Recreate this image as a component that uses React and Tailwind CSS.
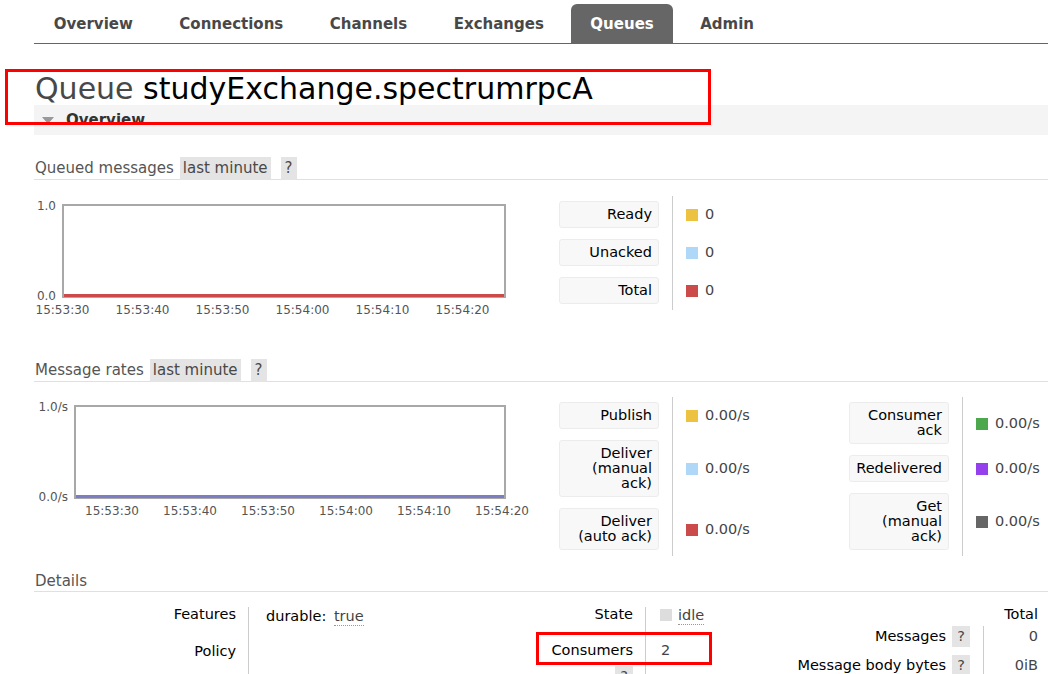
const tabs = ["Overview", "Connections", "Channels", "Exchanges", "Queues", "Admin"];

function Badge({ children, className = "" }) {
  return (
    <span className={`h-[23px] leading-[23px] bg-[#e4e4e4] text-[#484848] ${className}`}>{children}</span>
  );
}

function SectionHeader({ title, badges }) {
  return (
    <div className="flex items-center h-[23px] border-b border-[#e0e0e0] text-[15px] text-[#555]">
      <span className="ml-[1px]">{title}</span>
      {badges && (
        <>
          <Badge className="ml-[6px] px-[3px]">last minute</Badge>
          <Badge className="ml-[10px] px-[4px]">?</Badge>
        </>
      )}
    </div>
  );
}

function Chart({ plotLeft, yLabels, ticks, lineColor }) {
  const right = 472;
  return (
    <svg width="525" height="125" className="shrink-0 font-['DejaVu_Sans',sans-serif]">
      <rect x={plotLeft + 1} y="9" width={right - plotLeft - 2} height="92" fill="#fff" stroke="#a8a8a8" strokeWidth="2" />
      <line x1={plotLeft + 2} x2={right - 2} y1="99.5" y2="99.5" stroke={lineColor} strokeWidth="3" />
      <text x={plotLeft - 6} y="14" textAnchor="end" fontSize="12" fill="#545454">{yLabels[0]}</text>
      <text x={plotLeft - 6} y="103.5" textAnchor="end" fontSize="12" fill="#545454">{yLabels[1]}</text>
      {ticks.map((t) => (
        <text key={t.label} x={t.x} y="118" textAnchor="middle" fontSize="12" fill="#545454">
          {t.label}
        </text>
      ))}
    </svg>
  );
}

function Legend({ rows, valueWidth = "w-[177px]" }) {
  return (
    <div className="grid grid-cols-[113px_auto] self-start">
      {rows.map((r) => (
        <div key={r.label} className="contents">
          <div className="pt-[5px] pb-[6px] pr-[13px]">
            <div className="w-[100px] bg-[#f8f8f8] border border-[#ececec] rounded-[3px] text-right pl-[4px] pr-[6px] py-[5px] leading-[15px] text-[14.5px] text-black">
              {r.label}
            </div>
          </div>
          <div className={`${valueWidth} border-l border-[#ccc] pl-[13px] flex items-center gap-[7px] text-[14.5px] text-[#444]`}>
            <span className="w-[12px] h-[12px] shrink-0" style={{ backgroundColor: r.color }} />
            <span>{r.value}</span>
          </div>
        </div>
      ))}
    </div>
  );
}

const times = ["15:53:30", "15:53:40", "15:53:50", "15:54:00", "15:54:10", "15:54:20"];
const ticks1 = times.map((label, i) => ({ label, x: 28.5 + i * 80 }));
const ticks2 = times.map((label, i) => ({ label, x: 78 + i * 78 }));

function Abbr({ children }) {
  return <span className="text-[#444] border-b border-dotted border-[#999] pb-[1px]">{children}</span>;
}

function HelpBadge() {
  return <span className="w-[18px] h-[21px] leading-[21px] text-center bg-[#e4e4e4] text-[#484848]">?</span>;
}

export default function App() {
  return (
    <div className="relative w-[1048px] h-[674px] overflow-hidden bg-white font-['DejaVu_Sans',sans-serif]">
      {/* Tabs */}
      <nav className="ml-[34px] pt-[4px] border-b border-[#666] flex gap-[7px]">
        {tabs.map((t) => (
          <div
            key={t}
            className={
              t === "Queues"
                ? "h-[39px] pt-[2px] px-[19.75px] flex items-center rounded-t-[6px] bg-[#666] text-white font-bold text-[15px]"
                : "h-[39px] pt-[2px] px-[19.75px] flex items-center text-[#484848] font-bold text-[15px]"
            }
          >
            {t}
          </div>
        ))}
      </nav>

      <h1 className="ml-[35px] mt-[28px] h-[33px] leading-[33px] text-[30px] font-normal whitespace-nowrap">
        <span className="text-[#484848]">Queue</span> <span className="text-black">studyExchange.spectrumrpcA</span>
      </h1>

      <div className="ml-[34px] h-[30px] bg-[#f4f4f4] flex items-center">
        <span className="ml-[8px] w-0 h-0 border-x-[6px] border-x-transparent border-t-[7px] border-t-[#999]" />
        <span className="ml-[12px] font-bold text-[15px] text-[#333]">Overview</span>
      </div>

      <div className="ml-[34px]">
        <div className="mt-[22px]">
          <SectionHeader title="Queued messages" badges />
        </div>
        <div className="flex mt-[16px]">
          <Chart plotLeft={28} yLabels={["1.0", "0.0"]} ticks={ticks1} lineColor="#cb4b4b" />
          <Legend
            rows={[
              { label: "Ready", color: "#edc240", value: "0" },
              { label: "Unacked", color: "#afd8f8", value: "0" },
              { label: "Total", color: "#cb4b4b", value: "0" },
            ]}
          />
        </div>

        <div className="mt-[38px]">
          <SectionHeader title="Message rates" badges />
        </div>
        <div className="flex mt-[15px]">
          <Chart plotLeft={40} yLabels={["1.0/s", "0.0/s"]} ticks={ticks2} lineColor="#7d7dc6" />
          <Legend
            rows={[
              { label: "Publish", color: "#edc240", value: "0.00/s" },
              { label: "Deliver (manual ack)", color: "#afd8f8", value: "0.00/s" },
              { label: "Deliver (auto ack)", color: "#cb4b4b", value: "0.00/s" },
            ]}
          />
          <Legend
            valueWidth="w-[90px]"
            rows={[
              { label: "Consumer ack", color: "#4da74d", value: "0.00/s" },
              { label: "Redelivered", color: "#9440ed", value: "0.00/s" },
              { label: "Get (manual ack)", color: "#666666", value: "0.00/s" },
            ]}
          />
        </div>

        <div className="mt-[15px] flex items-center h-[21px] border-b border-[#e0e0e0] text-[15px] text-[#555]">
          <span className="ml-[1px]">Details</span>
        </div>

        <div className="flex mt-[15px] text-[14.5px] leading-[15px] text-black">
          {/* Table 1 */}
          <div className="grid grid-cols-[214px_222px] auto-rows-[37px]">
            <div className="text-right pr-[12px]">Features</div>
            <div className="border-l border-[#ccc] pl-[17px] whitespace-nowrap">
              durable: <span className="ml-[3px] inline-block mt-[2px]"><Abbr>true</Abbr></span>
            </div>
            <div className="text-right pr-[12px]">Policy</div>
            <div className="border-l border-[#ccc]" />
            <div className="text-right pr-[12px]">Operator policy</div>
            <div className="border-l border-[#ccc]" />
          </div>

          {/* Table 2 */}
          <div className="grid grid-cols-[175px_135px] grid-rows-[36px_23px_37px]">
            <div className="text-right pr-[12px]">State</div>
            <div className="border-l border-[#ccc] pl-[14px] flex items-start gap-[6px]">
              <span className="w-[12px] h-[12px] bg-[#ddd] mt-[2px]" />
              <span className="mt-[1px]"><Abbr>idle</Abbr></span>
            </div>
            <div className="text-right pr-[12px]">Consumers</div>
            <div className="border-l border-[#ccc] pl-[15px] text-[#444]">2</div>
            <div className="pr-[12px] flex justify-end items-start gap-[6px]">
              <span className="mt-[8px]">Consumer capacity</span>
              <HelpBadge />
            </div>
            <div className="border-l border-[#ccc]" />
          </div>

          {/* Table 3 */}
          <div className="grid grid-cols-[203px_65px] grid-rows-[19px_29px_29px]">
            <div />
            <div className="text-right pr-[10px]">Total</div>
            <div className="pr-[13px] flex justify-end items-start gap-[6px]">
              <span className="mt-[3px]">Messages</span>
              <HelpBadge />
            </div>
            <div className="border-l border-[#ccc] text-right pr-[10px] pt-[3px] text-[#444]">0</div>
            <div className="pr-[13px] flex justify-end items-start gap-[6px] whitespace-nowrap">
              <span className="mt-[3px]">Message body bytes</span>
              <HelpBadge />
            </div>
            <div className="border-l border-[#ccc] text-right pr-[10px] pt-[3px] text-[#444]">0iB</div>
          </div>
        </div>
      </div>

      {/* red annotation boxes */}
      <div className="absolute left-[5px] top-[69px] w-[706px] h-[56px] border-[3px] border-[#ff0000]" />
      <div className="absolute left-[536px] top-[632px] w-[176px] h-[33px] border-[3px] border-[#ff0000]" />
    </div>
  );
}
